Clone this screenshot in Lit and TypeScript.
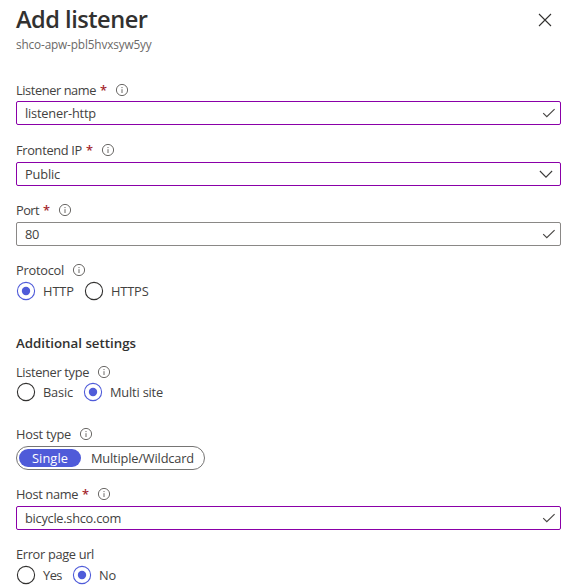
import { LitElement, html, css, svg, nothing } from "lit";
import { customElement, property } from "lit/decorators.js";

/** A run of text whose tracking is adjusted so that it fills a given width. */
@customElement("fit-text")
class FitText extends LitElement {
  @property({ type: Number }) w = 0;
  @property() text = "";
  static styles = css`
    :host { display: inline-block; white-space: nowrap; flex: none; }
    span { display: inline-block; }
  `;
  firstUpdated() {
    const span = this.renderRoot.querySelector("span") as HTMLElement;
    const natural = span.getBoundingClientRect().width;
    span.style.letterSpacing = (this.w - natural) / this.text.length + "px";
    this.style.width = this.w + "px";
  }
  render() {
    return html`<span>${this.text}</span>`;
  }
}

const t = (text: string, w: number) => html`<fit-text .text=${text} .w=${w}></fit-text>`;

const info = html`<svg class="info" width="14" height="14" viewBox="0 0 14 14">
  <circle cx="7" cy="7" r="5.6" fill="none" stroke="#6b6967" stroke-width="1" />
  <path d="M7 6.2V10M7 4V5.1" stroke="#6b6967" stroke-width="1" />
</svg>`;
const check = html`<svg class="check" width="14" height="12" viewBox="0 0 14 12">
  <path d="M1.2 6.2L4.8 9.7L12.6 2.1" fill="none" stroke="#484644" stroke-width="1.15" />
</svg>`;
const chevron = html`<svg class="chevron" width="14" height="12" viewBox="0 0 14 12">
  <path d="M0.9 3L7 9.1L13.1 3" fill="none" stroke="#3b3a39" stroke-width="1.1" />
</svg>`;

@customElement("app-root")
class AppRoot extends LitElement {
  static styles = css`
    :host {
      display: block;
      box-sizing: border-box;
      height: 587px;
      overflow: hidden;
      padding: 4px 13px 0 16px;
      background: #fff;
      color: #434241;
      font: 12.8px/20px "Open Sans", "Noto Sans", sans-serif;
    }
    header { display: flex; justify-content: space-between; height: 76px; }
    h1 { margin: 0; color: #323130; font-size: 23.6px; line-height: 31px; font-weight: 600; height: 30px; }
    .sub { font-size: 11.8px; line-height: 20px; color: #6b6967; }
    .close { margin: 9px 9px 0 0; }
    .label { display: flex; align-items: center; height: 20px; }
    .star { width: 6px; margin-left: 4px; color: #a4262c; font-size: 12.8px; font-weight: 600; height: 20px; }
    .info { margin-left: 8px; }
    .star + .info { margin-left: 9px; }
    .field {
      display: flex; align-items: center; justify-content: space-between;
      box-sizing: border-box; height: 24px; padding: 0 4px 0 8px;
      border: 1px solid #8a8886; border-radius: 2px;
    }
    .field.changed { border-color: #8a00a8; }
    .chevron { margin-right: 3px; }
    .text { height: 60px; display: flex; flex-direction: column; gap: 2px; }
    .text.first { gap: 1px; }
    .radios { display: flex; align-items: center; height: 20px; }
    .radio { display: flex; align-items: center; }
    .radio + .radio { margin-left: 10px; }
    .radio svg { margin-right: 7px; flex: none; }
    h2 { margin: 0; color: #323130; font-size: 13.3px; line-height: 20px; font-weight: 600; }
    .pills {
      display: flex; box-sizing: border-box; width: 189px; height: 24px; padding: 2px;
      margin-top: 2px;
      border: 1px solid #767574; border-radius: 12px; line-height: 18px;
    }
    .pill { height: 18px; border-radius: 9px; padding: 0 10px; }
    .pill.on { width: 62px; box-sizing: border-box; padding: 0 13px; background: #4f5bd9; color: #fff; font-weight: 500; }
    .g-protocol { height: 73px; }
    .g-settings { height: 29px; }
    .g-type { height: 62px; }
    .g-host { height: 60px; }
    .lower { margin-top: 1px; }
  `;

  label(text: string, w: number, required = false, hint = true) {
    return html`<div class="label">
      ${t(text, w)}${required ? html`<span class="star">*</span>` : nothing}${hint ? info : nothing}
    </div>`;
  }

  field(name: string, nw: number, value: string, vw: number, changed: boolean, icon: unknown, first = false) {
    return html`<div class="text ${first ? "first" : ""}">
      ${this.label(name, nw, true)}
      <div class="field ${changed ? "changed" : ""}">${t(value, vw)}${icon}</div>
    </div>`;
  }

  radio(text: string, w: number, on: boolean) {
    const c = on ? "#4f5bd9" : "#323130";
    return html`<div class="radio">
      <svg width="20" height="20" viewBox="0 0 20 20">
        <circle cx="10" cy="10" r="8.6" fill="none" stroke=${c} stroke-width="1.1" />
        ${on ? svg`<circle cx="10" cy="10" r="4.2" fill=${c} />` : nothing}
      </svg>
      ${t(text, w)}
    </div>`;
  }

  render() {
    return html`
      <header>
        <div>
          <h1>${t("Add listener", 131.5)}</h1>
          <div class="sub">${t("shco-apw-pbl5hvxsyw5yy", 135.5)}</div>
        </div>
        <svg class="close" width="14" height="14" viewBox="0 0 14 14">
          <path d="M1 1L13 13M13 1L1 13" stroke="#323130" stroke-width="1.1" />
        </svg>
      </header>
      ${this.field("Listener name", 80, "listener-http", 71, true, check, true)}
      ${this.field("Frontend IP", 66, "Public", 35, true, chevron)}
      ${this.field("Port", 23, "80", 14, false, check)}
      <div class="g-protocol">
        ${this.label("Protocol", 48)}
        <div class="radios lower">${this.radio("HTTP", 31, true)}${this.radio("HTTPS", 37.5, false)}</div>
      </div>
      <div class="g-settings"><h2>${t("Additional settings", 120)}</h2></div>
      <div class="g-type">
        ${this.label("Listener type", 73)}
        <div class="radios">${this.radio("Basic", 30, false)}${this.radio("Multi site", 53, true)}</div>
      </div>
      <div class="g-host">
        ${this.label("Host type", 55)}
        <div class="pills">
          <div class="pill on">${t("Single", 36)}</div>
          <div class="pill">${t("Multiple/Wildcard", 103)}</div>
        </div>
      </div>
      ${this.field("Host name", 62, "bicycle.shco.com", 96, true, check)}
      ${this.label("Error page url", 78, false, false)}
      <div class="radios lower">${this.radio("Yes", 19, false)}${this.radio("No", 17, true)}</div>
    `;
  }
}
